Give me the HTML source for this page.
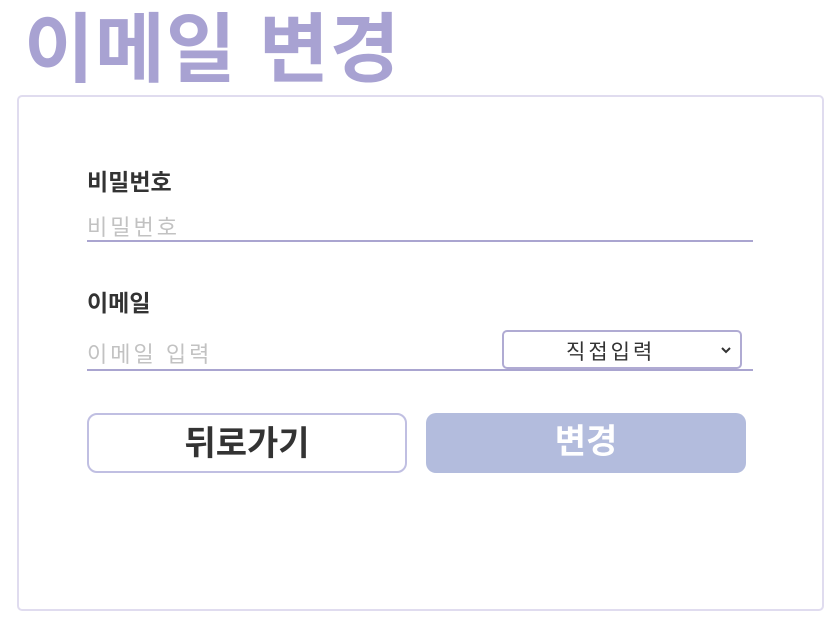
<!DOCTYPE html>
<html><head><meta charset="utf-8"><style>
body{margin:0;width:835px;height:620px;background:#fff;font-family:"Liberation Sans","Noto Sans CJK KR",sans-serif;position:relative;overflow:hidden}
.a{position:absolute}
h1{position:absolute;left:24px;top:1px;margin:0;font-size:76px;font-weight:700;color:#a8a2d2;letter-spacing:1px;line-height:100px}
.box{left:17px;top:95px;width:803px;height:512px;border:2px solid #e0dcef;border-radius:5px}
.lbl{font-size:23px;font-weight:700;color:#333;left:87px}
.ph{font-size:22px;color:#c2c2c2;left:87px;letter-spacing:3px}
.ul{left:87px;width:666px;height:2px;background:#aaa5d0}
.sel{left:502px;top:330px;width:236px;height:35px;border:2px solid #b0abd3;border-radius:5px;font-size:21px;color:#333;box-sizing:content-box}
.btn{top:413px;width:320px;height:60px;border-radius:10px;box-sizing:border-box;font-size:34px;font-weight:700;text-align:center;line-height:58px}
</style></head><body>
<h1>이메일 변경</h1>
<div class="a box"></div>
<div class="a lbl" style="top:163px">비밀번호</div>
<div class="a ph" style="top:210px">비밀번호</div>
<div class="a ul" style="top:240px"></div>
<div class="a lbl" style="top:284px">이메일</div>
<div class="a ph" style="top:337px">이메일 입력</div>
<div class="a sel"><span class="a" style="left:62px;top:4px;letter-spacing:3px">직접입력</span>
<svg class="a" style="left:217px;top:14px" width="10" height="8" viewBox="0 0 10 8"><path d="M1 2l4 4 4-4" stroke="#333" stroke-width="2" fill="none"/></svg></div>
<div class="a ul" style="top:369px"></div>
<div class="a btn" style="left:87px;border:2px solid #c0bfe2;color:#333">뒤로가기</div>
<div class="a btn" style="left:426px;background:#b3bcdd;color:#fff">변경</div>
</body></html>
